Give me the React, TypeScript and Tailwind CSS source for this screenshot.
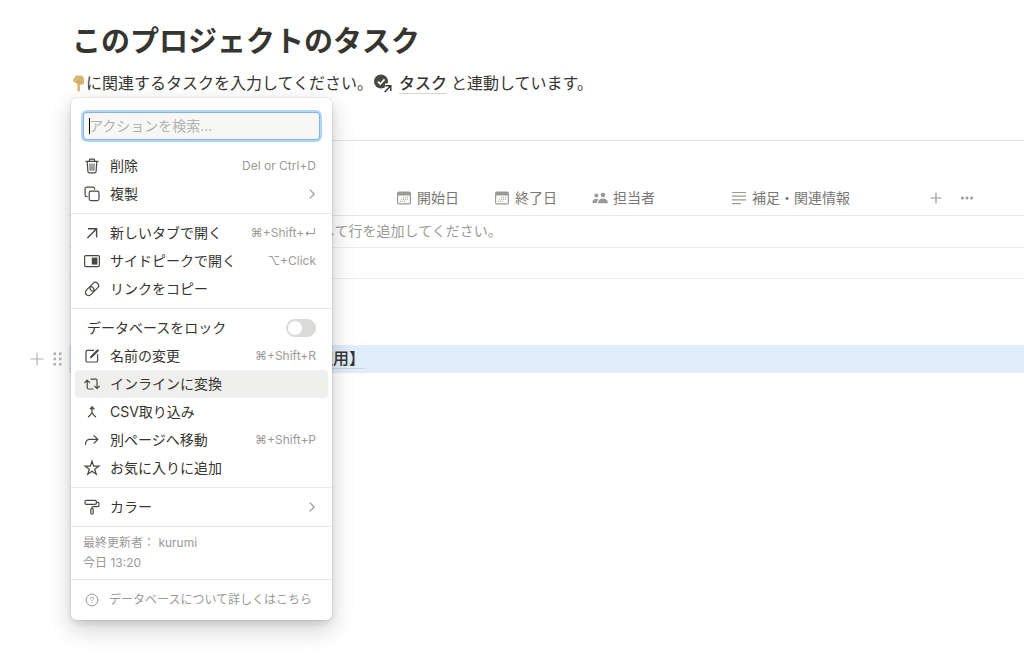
import type { ReactNode } from 'react';

const line = {
  fill: 'none',
  stroke: 'currentColor',
  strokeWidth: 1.2,
  strokeLinecap: 'round',
  strokeLinejoin: 'round',
} as const;

function Icon({ children }: { children: ReactNode }) {
  return (
    <svg viewBox="0 0 18 18" className="size-[18px] shrink-0 text-[#4a4843]" aria-hidden="true" {...line}>
      {children}
    </svg>
  );
}

const icons = {
  trash: (
    <Icon>
      <path d="M3 4.400h12M6.500 4.200V2.900a.8.8 0 0 1 .8-.8h3.400a.8.8 0 0 1 .8.8v1.300M4.200 4.600l.7 10a1.500 1.500 0 0 0 1.500 1.300h5.200a1.500 1.500 0 0 0 1.500-1.300l.7-10" />
      <path strokeWidth="1" d="M6.900 6.900l.3 6.500M9 6.900v6.500M11.100 6.900l-.3 6.500" />
    </Icon>
  ),
  duplicate: (
    <Icon>
      <rect x="6.200" y="6.200" width="9.800" height="9.400" rx="1.800" />
      <path d="M4.200 11.600h-.4a1.700 1.700 0 0 1-1.700-1.700V3.800a1.700 1.700 0 0 1 1.700-1.700H10a1.700 1.700 0 0 1 1.700 1.700v.3" />
    </Icon>
  ),
  open: (
    <Icon>
      <path strokeWidth="1.400" strokeLinecap="butt" strokeLinejoin="miter" d="M5 4.800h8.600v8.600M13.400 5 4.400 14" />
    </Icon>
  ),
  peek: (
    <Icon>
      <rect x="1.600" y="3.600" width="14.800" height="11" rx="1.400" />
      <rect x="8.800" y="5.600" width="5.600" height="7" fill="currentColor" stroke="none" />
    </Icon>
  ),
  link: (
    <Icon>
      <g transform="rotate(-45 9 9)">
        <rect x="1" y="5.800" width="9.600" height="6.400" rx="3.200" />
        <rect x="7.400" y="5.800" width="9.600" height="6.400" rx="3.200" />
      </g>
    </Icon>
  ),
  rename: (
    <Icon>
      <path d="M10.800 3.400H4.600A1.600 1.600 0 0 0 3 5v8.400A1.600 1.600 0 0 0 4.600 15H13a1.600 1.600 0 0 0 1.600-1.600V7.600" />
      <path d="M7.600 10.600l.4-1.200 6.600-6.600.8.800-6.600 6.600z" />
    </Icon>
  ),
  convert: (
    <Icon>
      <path d="M10 14H5.400a1.200 1.200 0 0 1-1.200-1.200V5.400M1.800 7.600l2.400-2.400 2.400 2.400M8 4.200h4.800A1.200 1.200 0 0 1 14 5.400v8M11.600 11.200l2.400 2.400 2.400-2.400" />
    </Icon>
  ),
  merge: (
    <Icon>
      <path d="M9 4v4.800c0 1.600-.8 2.600-3.600 5M9 8.800c0 1.600.8 2.600 3.600 5" />
      <path fill="currentColor" d="M9 3.600 6.900 6h4.200z" strokeWidth="0.8" />
    </Icon>
  ),
  move: (
    <Icon>
      <path d="M2.600 13.400v-1a4 4 0 0 1 4-4h8M11 4.600l3.900 3.800L11 12.200" />
    </Icon>
  ),
  star: (
    <Icon>
      <path strokeLinejoin="miter" d="M9 2.200l1.700 5h5.200l-4.200 3.100 1.600 5L9 12.200l-4.300 3.100 1.600-5-4.200-3.100h5.200z" />
    </Icon>
  ),
  roller: (
    <Icon>
      <rect x="2" y="2.400" width="11.400" height="4" rx="1.400" />
      <path d="M13.600 4.300h1.300a1 1 0 0 1 1 1v2.300a1 1 0 0 1-1 1H9.900a1 1 0 0 0-1 1v.9" />
      <rect x="7.800" y="10.600" width="2.400" height="5.400" rx="0.900" />
    </Icon>
  ),
  chevron: (
    <svg viewBox="0 0 8 12" className="h-3 w-2 text-[#9b9a97]" aria-hidden="true" {...line}>
      <path d="M2 1.800 6.200 6 2 10.200" />
    </svg>
  ),
};

function CalendarIcon() {
  return (
    <svg viewBox="0 0 16 16" className="size-4 shrink-0 text-[#9b9a97]" aria-hidden="true" fill="currentColor">
      <path fillRule="evenodd" d="M3 1.600h10a2 2 0 0 1 2 2v8.800a2 2 0 0 1-2 2H3a2 2 0 0 1-2-2V3.600a2 2 0 0 1 2-2zM2.200 5.400v6.800c0 .6.400 1 1 1h9.600c.6 0 1-.400 1-1V5.400z" />
      <path d="M7 6.800h1v1H7zM9 6.800h1v1H9zM11 6.800h1v1h-1zM5 8.800h1v1H5zM7 8.800h1v1H7zM9 8.800h1v1H9zM11 8.800h1v1h-1zM4 10.800h1v1H4zM6 10.800h1v1H6zM8 10.800h1v1H8z" />
    </svg>
  );
}

function PeopleIcon() {
  return (
    <svg viewBox="0 0 16 16" className="size-4 shrink-0 text-[#9b9a97]" aria-hidden="true" fill="currentColor">
      <circle cx="11" cy="5" r="2.300" />
      <circle cx="4.400" cy="5.600" r="2" />
      <path d="M6 12.600c0-2.600 2.200-4.200 5-4.200s4.900 1.600 4.900 4.200c0 .4-.2.6-.6.6H6.600c-.4 0-.6-.2-.6-.6zM.4 12.500c0-2.300 1.800-3.700 4-3.700.9 0 1.600.2 2.200.6-1.200.9-1.700 2.100-1.700 3.700H1c-.4 0-.6-.2-.6-.6z" />
    </svg>
  );
}

function TextIcon() {
  return (
    <svg viewBox="0 0 16 16" className="size-4 shrink-0 text-[#9b9a97]" aria-hidden="true" {...line}>
      <path d="M1.400 2.500h13.200M1.400 6.200h13.200M1.400 9.900h13.200M1.400 13.600h8" />
    </svg>
  );
}

type Item = {
  label: string;
  icon: ReactNode;
  hint?: ReactNode;
  active?: boolean;
};

const editItems: Item[] = [
  { label: '削除', icon: icons.trash, hint: 'Del or Ctrl+D' },
  { label: '複製', icon: icons.duplicate, hint: icons.chevron },
];

const openItems: Item[] = [
  { label: '新しいタブで開く', icon: icons.open, hint: '⌘+Shift+↵' },
  { label: 'サイドピークで開く', icon: icons.peek, hint: '⌥+Click' },
  { label: 'リンクをコピー', icon: icons.link },
];

const databaseItems: Item[] = [
  { label: '名前の変更', icon: icons.rename, hint: '⌘+Shift+R' },
  { label: 'インラインに変換', icon: icons.convert, active: true },
  { label: 'CSV取り込み', icon: icons.merge },
  { label: '別ページへ移動', icon: icons.move, hint: '⌘+Shift+P' },
  { label: 'お気に入りに追加', icon: icons.star },
];

const colorItems: Item[] = [{ label: 'カラー', icon: icons.roller, hint: icons.chevron }];

function MenuItems({ items }: { items: Item[] }) {
  return items.map((item) => (
    <button
      key={item.label}
      type="button"
      className={`flex h-7 w-full items-center gap-[9px] rounded pr-3 pl-2 text-left hover:bg-[#efefee] ${item.active ? 'bg-[#efefee]' : ''}`}
    >
      {item.icon}
      <span className="grow">{item.label}</span>
      {item.hint && <span className="text-xs text-[#9b9a97]">{item.hint}</span>}
    </button>
  ));
}

function ActionMenu() {
  return (
    <div className="absolute top-[98px] left-[71px] w-[261px] divide-y divide-[#e9e9e8] rounded-md bg-white text-sm shadow-[0_0_0_1px_rgba(15,15,15,0.05),0_3px_6px_rgba(15,15,15,0.1),0_9px_24px_rgba(15,15,15,0.2)]">
      <div className="px-1 pt-3.5 pb-[5px]">
        <div className="relative mx-2 mb-3">
          <input
            type="text"
            aria-label="アクションを検索"
            placeholder="アクションを検索..."
            className="block h-7 w-full rounded bg-[#f7f7f5] px-1.5 pb-0.5 shadow-[inset_0_0_0_1px_rgba(35,131,226,0.57),0_0_0_2px_rgba(35,131,226,0.35)] outline-none placeholder:text-[#b3b2af]"
          />
          <span className="absolute top-1.5 left-1.5 h-4 w-px bg-black" />
        </div>
        <MenuItems items={editItems} />
      </div>
      <div className="px-1 py-[5px]">
        <MenuItems items={openItems} />
      </div>
      <div className="px-1 py-[5px]">
        <label className="flex h-7 items-center justify-between px-3">
          データベースをロック
          <input
            type="checkbox"
            className="h-[18px] w-[30px] appearance-none rounded-full bg-[#dadad9] p-0.5 before:block before:size-3.5 before:rounded-full before:bg-white"
          />
        </label>
        <MenuItems items={databaseItems} />
      </div>
      <div className="px-1 py-[5px]">
        <MenuItems items={colorItems} />
      </div>
      <div className="px-3 py-1.5 text-xs leading-5 text-[#9b9a97]">
        <p>最終更新者： kurumi</p>
        <p>今日 13:20</p>
      </div>
      <a href="#help" className="flex h-10 items-center gap-2.5 px-3.5 text-xs text-[#9b9a97]">
        <svg viewBox="0 0 14 14" className="size-3.5 shrink-0" aria-hidden="true" {...line} strokeWidth="1">
          <circle cx="7" cy="7" r="5.900" />
          <path d="M5.500 5.800c0-.9.600-1.500 1.500-1.500s1.500.6 1.500 1.400c0 1.100-1.500 1.100-1.500 2.200M7 9.600v.1" />
        </svg>
        データベースについて詳しくはこちら
      </a>
    </div>
  );
}

export default function App() {
  return (
    <div className="relative min-h-screen overflow-x-hidden bg-white pt-[17px] pl-[69px] font-['Inter','Noto_Sans_CJK_JP','DejaVu_Sans',sans-serif] text-[#37352f]">
      <h1 className="pl-[3px] text-[29px] leading-[50px] font-bold">このプロジェクトのタスク</h1>
      <p className="mt-1 flex items-center pl-[3px] text-base leading-6">
        <svg viewBox="0 0 14 18" className="h-[18px] w-3.5 shrink-0" role="img" aria-label="下を指す手" fill="#d9b672">
          <path d="M1.400 5 4 1.400h6l2 2.800v5c0 1.400-1.600 1.700-2 .7-.3 1.200-1.600 1.300-2.100.5v5.800c0 1.700-2.500 1.700-2.500 0V10L1.600 7.700C.8 6.800.8 5.900 1.400 5z" />
          <path d="M5.600 5.400v4M7.600 6.400V10M9.700 6v3" stroke="#c39b54" strokeWidth="0.5" />
        </svg>
        <span>に関連するタスクを入力してください。</span>
        <a href="#tasks" className="flex items-center gap-1.5 font-medium">
          <svg viewBox="0 0 20 20" className="size-5 shrink-0" aria-hidden="true">
            <circle cx="8" cy="8.500" r="7" fill="#4a4843" />
            <path d="M5 8.700l2.300 2.300 4.200-4.700" fill="none" stroke="#fff" strokeWidth="1.800" />
            <path d="M12 12.500h6v6M17.600 12.900 11.600 18.900" fill="none" stroke="#fff" strokeWidth="4" />
            <path d="M12.400 12.700h5.400v5.400M17.600 12.900 11.600 18.900" fill="none" stroke="#37352f" strokeWidth="1.400" />
          </svg>
          <span className="border-b border-[#d6d5d3] leading-5">タスク</span>
        </a>
        <span className="ml-1">と連動しています。</span>
      </p>

      <section className="mt-[45px] border-t border-[#e6e6e5] pt-10">
        <table className="w-full table-fixed text-left text-sm">
          <colgroup>
            <col className="w-[319px]" />
            <col className="w-[98px]" />
            <col className="w-[98px]" />
            <col className="w-[139px]" />
            <col className="w-[197px]" />
            <col />
          </colgroup>
          <thead>
            <tr className="h-[34px] border-b border-[#e6e6e5] text-[#787774]">
              <th className="font-normal" aria-label="名前" />
              <th className="px-2 font-normal">
                <span className="flex items-center gap-[5px]"><CalendarIcon />開始日</span>
              </th>
              <th className="px-2 font-normal">
                <span className="flex items-center gap-[5px]"><CalendarIcon />終了日</span>
              </th>
              <th className="px-2 font-normal">
                <span className="flex items-center gap-[5px]"><PeopleIcon />担当者</span>
              </th>
              <th className="px-2 font-normal">
                <span className="flex items-center gap-[5px]"><TextIcon />補足・関連情報</span>
              </th>
              <th className="px-2">
                <span className="flex items-center gap-[15px] text-[#9b9a97]">
                  <button type="button" aria-label="プロパティを追加">
                    <svg viewBox="0 0 16 16" className="size-4" aria-hidden="true" {...line}>
                      <path d="M8 3v10M3 8h10" />
                    </svg>
                  </button>
                  <button type="button" aria-label="その他">
                    <svg viewBox="0 0 16 16" className="size-4" aria-hidden="true" fill="currentColor">
                      <circle cx="3.400" cy="8" r="1.500" />
                      <circle cx="8" cy="8" r="1.500" />
                      <circle cx="12.600" cy="8" r="1.500" />
                    </svg>
                  </button>
                </span>
              </th>
            </tr>
          </thead>
          <tbody>
            <tr className="h-8 border-b border-[#ededec]">
              <td colSpan={6} className="pl-[252px] text-[#9b9a97]">
                して行を追加してください。
              </td>
            </tr>
            <tr className="h-[31px] border-b border-[#ededec]">
              <td colSpan={6} />
            </tr>
          </tbody>
        </table>
      </section>

      <div className="mt-[66px] -ml-[69px] flex h-7 items-center">
        <div className="flex w-[69px] items-center gap-[7px] pl-7 text-[#b3b2af]">
          <button type="button" aria-label="ブロックを追加">
            <svg viewBox="0 0 18 18" className="size-[18px]" aria-hidden="true" {...line}>
              <path d="M9 3v12M3 9h12" />
            </svg>
          </button>
          <button type="button" aria-label="ドラッグして移動">
            <svg viewBox="0 0 10 16" className="h-4 w-2.5" aria-hidden="true" fill="currentColor">
              <path d="M.5 1.500H3V4H.5zM6 1.500h2.500V4H6zM.5 6.800H3v2.500H.5zM6 6.800h2.500v2.500H6zM.5 12.100H3v2.500H.5zM6 12.100h2.500v2.500H6z" />
            </svg>
          </button>
        </div>
        <div className="flex h-7 grow items-center bg-[#e1edfb]">
          <a href="#database" className="w-[296px] border-b border-[#cbd5df] text-right text-base leading-5 font-medium">
            理用】
          </a>
        </div>
      </div>

      <ActionMenu />
    </div>
  );
}
